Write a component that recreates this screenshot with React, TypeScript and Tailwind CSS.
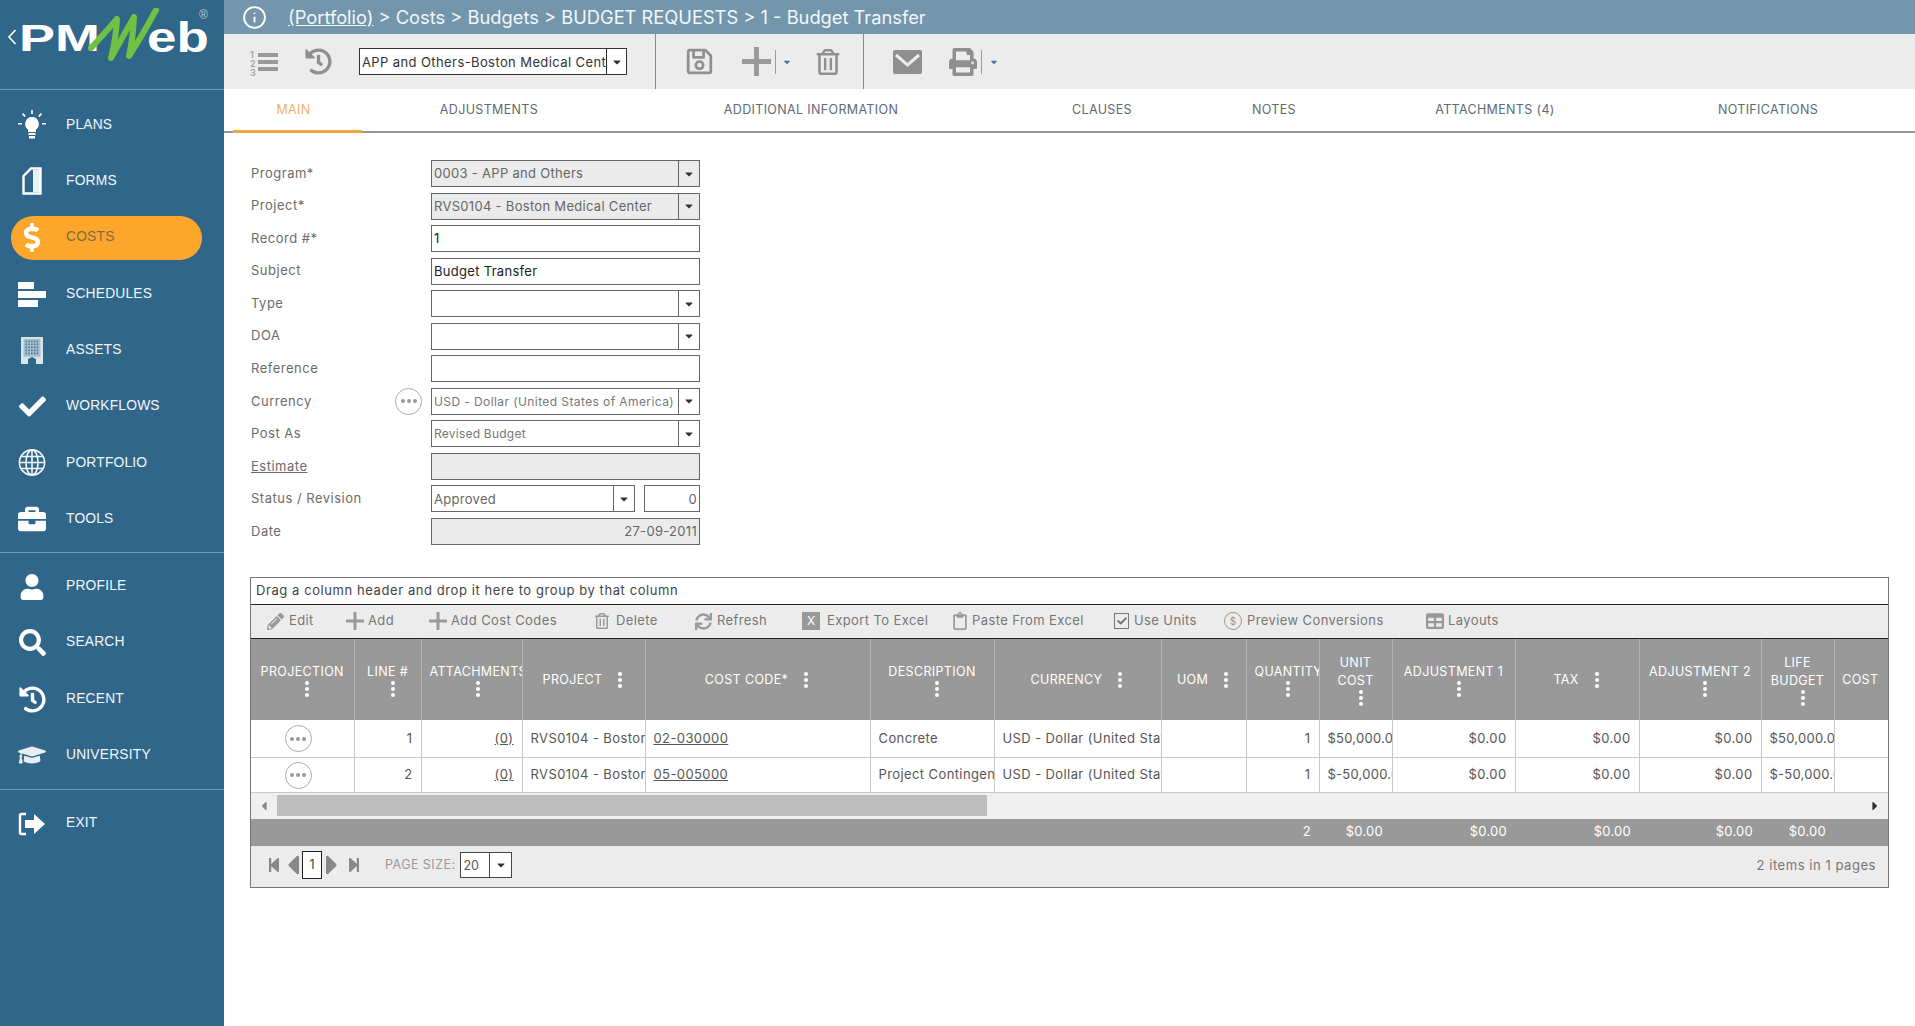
import React from "react";
import {
  FaCheck, FaBriefcase, FaSearch, FaHistory, FaGraduationCap, FaDollarSign, FaUser,
  FaRegSave, FaRegTrashAlt, FaPrint, FaPencilAlt, FaSync, FaRegClipboard, FaTable,
  FaStepBackward, FaStepForward, FaCaretLeft, FaCaretRight, FaCaretDown,
} from "react-icons/fa";
import { Info } from "lucide-react";

const font = "font-['Inter','Noto_Sans',sans-serif]";

function PlanIcon() {
  return (
    <svg viewBox="0 0 28 30" className="w-[28px] h-[30px]" fill="white">
      <path d="M14 7a7 7 0 0 0-4 12.6V22h8v-2.4A7 7 0 0 0 14 7z" />
      <rect x="10.5" y="23" width="7" height="2" />
      <rect x="11" y="26" width="6" height="2.5" />
      <path d="M13.2 0h1.6v4h-1.6zM0 13h4v1.6H0zM24 13h4v1.6h-4zM4 4.2l1.2-1.1 2.6 2.8-1.2 1.1zM24 4.2l-1.2-1.1-2.6 2.8 1.2 1.1z" />
    </svg>
  );
}
function FormIcon() {
  return (
    <svg viewBox="0 0 20 28" className="w-[20px] h-[28px]">
      <path d="M1.5 9 9 1.5h9.5v25h-17z" fill="none" stroke="white" strokeWidth="2.4" />
      <path d="M11 3h7v22h-7z" fill="white" opacity="0.9" />
    </svg>
  );
}
function SchedIcon() {
  return (
    <div className="flex flex-col gap-[2px] w-[28px]">
      <div className="h-[7px] w-[16px] bg-white" />
      <div className="h-[7px] w-[28px] bg-white" />
      <div className="h-[7px] w-[20px] bg-white" />
    </div>
  );
}
function AssetIcon() {
  const dots: React.ReactNode[] = [];
  for (let y = 0; y < 5; y++) {
    for (let x = 0; x < 5; x++) {
      dots.push(<rect key={`${x}-${y}`} x={4.4 + x * 2.8} y={3.5 + y * 3} width="1.6" height="1.8" fill="#4f7c9a" />);
    }
  }
  return (
    <svg viewBox="0 0 22 27" className="w-[22px] h-[27px]">
      <rect x="0" y="0" width="22" height="27" fill="#dbe5ec" />
      <rect x="2.5" y="1.8" width="17" height="18" fill="#a9c0cf" />
      {dots}
      <path d="M7 27v-5l4-2 4 2v5z" fill="#30668a" />
    </svg>
  );
}
function GlobeIcon() {
  return (
    <svg viewBox="0 0 30 30" className="w-[29px] h-[29px]" fill="none" stroke="#f2f6f8" strokeWidth="1.7">
      <circle cx="15" cy="15" r="13.5" />
      <ellipse cx="15" cy="15" rx="6.5" ry="13.5" />
      <path d="M15 1.5v27M1.5 15h27M3.5 8.5h23M3.5 21.5h23" />
    </svg>
  );
}
function ExitIcon() {
  return (
    <svg viewBox="0 0 28 26" className="w-[28px] h-[26px]">
      <path d="M8 3H3.5A1.5 1.5 0 0 0 2 4.5v17A1.5 1.5 0 0 0 3.5 23H8" fill="none" stroke="white" strokeWidth="2.4" />
      <path d="M7 9h9V3l11 10-11 10v-6H7z" fill="white" />
    </svg>
  );
}
function Cross({ className }: { className: string }) {
  return (
    <svg viewBox="0 0 24 24" className={className} fill="#999">
      <path d="M10 0h4v10h10v4H14v10h-4V14H0v-4h10z" />
    </svg>
  );
}

const nav1: [string, React.ReactNode][] = [
  ["PLANS", <PlanIcon />],
  ["FORMS", <FormIcon />],
  ["COSTS", <FaDollarSign className="text-white text-[29px]" />],
  ["SCHEDULES", <SchedIcon />],
  ["ASSETS", <AssetIcon />],
  ["WORKFLOWS", <FaCheck className="text-white text-[27px]" />],
  ["PORTFOLIO", <GlobeIcon />],
  ["TOOLS", <FaBriefcase className="text-white text-[28px]" />],
];
const nav2: [string, React.ReactNode][] = [
  ["PROFILE", <FaUser className="text-white text-[26px]" />],
  ["SEARCH", <FaSearch className="text-white text-[27px]" />],
  ["RECENT", <FaHistory className="text-white text-[27px]" />],
  ["UNIVERSITY", <FaGraduationCap className="text-[#e8eef2] text-[28px]" />],
];

function NavItem({ label, icon, active }: { label: string; icon: React.ReactNode; active?: boolean }) {
  return (
    <div className="h-[56.3px] flex items-center relative">
      {active && <div className="absolute left-[11px] top-[6px] w-[191px] h-[44px] rounded-[22px] bg-[#fca72c]" />}
      <div className="relative w-[66px] pl-[18px] pr-[20px] flex justify-center shrink-0">
        <div className="w-[28px] flex justify-center">{icon}</div>
      </div>
      <span className={`relative font-['Liberation_Sans',sans-serif] text-[13.8px] tracking-[0.2px] font-medium ${active ? "text-[#7d6a45]" : "text-[#f2f6f8]"}`}>{label}</span>
    </div>
  );
}

function Sidebar() {
  return (
    <aside className="w-[224px] shrink-0 bg-[#30668a] flex flex-col">
      <div className="h-[90px] border-b border-[#6f9ab5] relative font-['Liberation_Sans',sans-serif] shrink-0">
        <svg viewBox="0 0 10 16" className="absolute left-[7px] top-[29px] w-[10px] h-[16px]">
          <path d="M8.5 1 2 8l6.5 7" fill="none" stroke="white" strokeWidth="1.6" />
        </svg>
        <span className="absolute left-[19px] top-[21px] text-white text-[36px] leading-none font-bold scale-x-[1.5] origin-left">PM</span>
        <span className="absolute left-[147px] top-[17px] text-white text-[42px] leading-none font-bold scale-x-[1.26] origin-left">eb</span>
        <svg viewBox="0 0 72 56" className="absolute left-[88px] top-[8px] w-[72px] h-[56px]">
          <path d="M3 40 Q16 26 29 11 Q28 30 23 50 Q34 30 46 9 Q45 30 41 48 Q54 28 68 2" fill="none" stroke="#6fc043" strokeWidth="6" strokeLinejoin="round" strokeLinecap="round" />
        </svg>
        <span className="absolute left-[199px] top-[6px] text-[#b7cad6] text-[12px]">®</span>
      </div>
      <div className="pt-[7px]">
        {nav1.map(([l, i]) => <NavItem key={l} label={l} icon={i} active={l === "COSTS"} />)}
      </div>
      <div className="mt-[5px] border-t border-[#6f9ab5] pt-[5px]">
        {nav2.map(([l, i]) => <NavItem key={l} label={l} icon={i} />)}
      </div>
      <div className="mt-[5px] border-t border-[#6f9ab5] pt-[6px]">
        <NavItem label="EXIT" icon={<ExitIcon />} />
      </div>
    </aside>
  );
}

function Caret({ className = "" }: { className?: string }) {
  return <FaCaretDown className={`text-[#333] text-[12px] ${className}`} />;
}

function TopBars() {
  return (
    <>
      <div className="h-[34px] bg-[#7396ad] flex items-center text-white shrink-0">
        <Info className="ml-[18px] w-[25px] h-[25px]" strokeWidth={1.8} />
        <div className="ml-[21px] pt-[1px] text-[18.3px] text-[#f4f7f9] whitespace-nowrap">
          <span className="underline">(Portfolio)</span> &gt; Costs &gt; Budgets &gt; BUDGET REQUESTS &gt; 1 - Budget Transfer
        </div>
      </div>
      <div className="h-[55px] bg-[#ececec] flex items-center shrink-0">
        <div className="ml-[26px] w-[28px] text-[#a5a5a5] flex flex-col gap-[3px] relative">
          <div className="h-[4px] ml-[8px] bg-[#999]" />
          <div className="h-[4px] ml-[8px] bg-[#999]" />
          <div className="h-[4px] ml-[8px] bg-[#999]" />
          <div className="absolute left-0 -top-[3px] text-[9px] leading-[9px] font-semibold">1<br />2<br />3</div>
        </div>
        <FaHistory className="ml-[27px] text-[#8f8f8f] text-[27px]" />
        <div className="ml-[27px] w-[268px] h-[27px] bg-white border border-[#333] flex items-center">
          <span className="flex-1 pl-[2px] pt-[2px] text-[13px] text-[#333] overflow-hidden whitespace-nowrap tracking-[0.4px]">APP and Others-Boston Medical Center</span>
          <div className="w-[20px] h-full border-l border-[#333] flex items-center justify-center"><Caret /></div>
        </div>
        <div className="ml-[28px] w-px h-full bg-[#888]" />
        <FaRegSave className="ml-[29px] text-[#8f8f8f] text-[29px]" />
        <Cross className="ml-[28px] w-[29px] h-[29px]" />
        <div className="ml-[4px] w-px h-[24px] bg-[#9a9aa8]" />
        <FaCaretDown className="ml-[6px] text-[#5a6c9a] text-[10px]" />
        <FaRegTrashAlt className="ml-[23px] text-[#8f8f8f] text-[26px]" />
        <div className="ml-[22px] w-px h-full bg-[#888]" />
        <div className="ml-[29px] w-[29px] h-[24px] rounded-[2px] bg-[#8f8f8f] relative overflow-hidden">
          <svg viewBox="0 0 29 24" className="w-[29px] h-[24px]"><path d="M3 5l11.5 10L26 5" fill="none" stroke="#ececec" strokeWidth="3" /></svg>
        </div>
        <FaPrint className="ml-[27px] text-[#8f8f8f] text-[28px]" />
        <div className="ml-[4px] w-px h-[24px] bg-[#9a9aa8]" />
        <FaCaretDown className="ml-[7px] text-[#5a6c9a] text-[10px]" />
      </div>
      <div className="h-[44px] border-b-2 border-[#999] relative flex items-center text-[12.5px] tracking-[0.35px] text-[#5d6a75] shrink-0">
        <div className="absolute left-[9px] bottom-[-2px] w-[129px] h-[3px] bg-[#f0a63c]" />
        <div className="w-[138px] pl-[1px] text-center text-[#f2b06a]">MAIN</div>
        <div className="w-[128px] ml-[63px] text-center">ADJUSTMENTS</div>
        <div className="w-[190px] ml-[163px] text-center">ADDITIONAL INFORMATION</div>
        <div className="w-[80px] ml-[156px] text-center">CLAUSES</div>
        <div className="w-[60px] ml-[102px] text-center">NOTES</div>
        <div className="w-[130px] ml-[126px] text-center">ATTACHMENTS (4)</div>
        <div className="w-[120px] ml-[148px] text-center">NOTIFICATIONS</div>
      </div>
    </>
  );
}

function Field({ value, select, disabled, light, right, dark, tight, className = "w-[269px]" }: { value?: string; select?: boolean; disabled?: boolean; light?: boolean; right?: boolean; dark?: boolean; tight?: boolean; className?: string }) {
  return (
    <div className={`h-[27px] border border-[#666] flex items-center ${disabled ? "bg-[#ebebeb]" : "bg-white"} ${className}`}>
      <span className={`flex-1 px-[2px] pt-[1px] whitespace-nowrap overflow-hidden ${right ? "text-right" : ""} ${dark ? "text-[#222] text-[13px] tracking-[0.3px]" : light ? `text-[#777] text-[12px] ${tight ? "tracking-[0.23px]" : "tracking-[0.41px]"}` : "text-[#666] text-[13px] tracking-[0.3px]"}`}>{value}</span>
      {select && <div className="w-[21px] h-full border-l border-[#666] flex items-center justify-center shrink-0"><Caret /></div>}
    </div>
  );
}

function Ellipsis() {
  return (
    <div className="w-[27px] h-[27px] rounded-full border border-[#aaa] bg-white flex items-center justify-center gap-[2px]">
      <span className="w-[4px] h-[4px] rounded-full bg-[#999]" />
      <span className="w-[4px] h-[4px] rounded-full bg-[#999]" />
      <span className="w-[4px] h-[4px] rounded-full bg-[#999]" />
    </div>
  );
}

function Form() {
  const rows: [string, React.ReactNode, React.ReactNode?][] = [
    ["Program*", <Field value="0003 - APP and Others" select disabled />],
    ["Project*", <Field value="RVS0104 - Boston Medical Center" select disabled />],
    ["Record #*", <Field value="1" dark />],
    ["Subject", <Field value="Budget Transfer" dark />],
    ["Type", <Field select />],
    ["DOA", <Field select />],
    ["Reference", <Field />],
    ["Currency", <Field value="USD - Dollar (United States of America)" select light />, <Ellipsis />],
    ["Post As", <Field value="Revised Budget" select light tight />],
    ["Estimate", <Field disabled />],
    ["Status / Revision", <div className="flex justify-between w-[269px]"><Field value="Approved" select className="w-[204px]" /><Field value="0" right className="w-[56px]" /></div>],
    ["Date", <Field value="27-09-2011" disabled right />],
  ];
  return (
    <div className="ml-[27px] mt-[27px] flex flex-col gap-[5.55px]">
      {rows.map(([l, f, extra]) => (
        <div key={l} className="flex items-center h-[27px]">
          <div className="w-[180px] pr-[9px] flex items-center justify-between">
            <span className={`text-[13px] tracking-[0.5px] text-[#6b6b6b] ${l === "Estimate" ? "underline" : ""}`}>{l}</span>
            {extra}
          </div>
          {f}
        </div>
      ))}
    </div>
  );
}

function TI({ icon, label, w, slot = "w-[22px]" }: { icon: React.ReactNode; label: string; w: string; slot?: string }) {
  return (
    <div className={`flex items-center shrink-0 ${w}`}>
      <div className={`${slot} flex items-center shrink-0`}>{icon}</div>
      <span className="text-[13px] tracking-[0.4px] text-[#777] whitespace-nowrap">{label}</span>
    </div>
  );
}

function Dots({ shift }: { shift?: boolean }) {
  return (
    <span className={`inline-flex flex-col gap-[2px] items-center w-[4px] shrink-0 ${shift ? "ml-[10px]" : ""}`}>
      <span className="w-[4px] h-[4px] rounded-full bg-white" />
      <span className="w-[4px] h-[4px] rounded-full bg-white" />
      <span className="w-[4px] h-[4px] rounded-full bg-white" />
    </span>
  );
}

type Col = { label: string[]; w: string; stacked?: boolean; noDots?: boolean; clip?: boolean };
const cols: Col[] = [
  { label: ["PROJECTION"], w: "w-[103px]", stacked: true },
  { label: ["LINE #"], w: "w-[67px]", stacked: true },
  { label: ["ATTACHMENTS"], w: "w-[101px]", stacked: true, clip: true },
  { label: ["PROJECT"], w: "w-[123px]" },
  { label: ["COST CODE*"], w: "w-[225px]" },
  { label: ["DESCRIPTION"], w: "w-[124px]", stacked: true },
  { label: ["CURRENCY"], w: "w-[167px]" },
  { label: ["UOM"], w: "w-[85px]" },
  { label: ["QUANTITY"], w: "w-[73px]", stacked: true, clip: true },
  { label: ["UNIT", "COST"], w: "w-[73px]", stacked: true },
  { label: ["ADJUSTMENT 1"], w: "w-[123px]", stacked: true },
  { label: ["TAX"], w: "w-[124px]" },
  { label: ["ADJUSTMENT 2"], w: "w-[122px]", stacked: true },
  { label: ["LIFE", "BUDGET"], w: "w-[73px]", stacked: true },
  { label: ["COST"], w: "w-[54px]", noDots: true },
];

const rowsData = [
  { line: "1", code: "02-030000", desc: "Concrete", cost: "$50,000.00" },
  { line: "2", code: "05-005000", desc: "Project Contingency", cost: "$-50,000.00" },
];

const cell = "border-r border-[#c9c9c9] pl-[8px] pr-[8px] pt-[1px] whitespace-nowrap overflow-hidden text-[13px] tracking-[0.4px] text-[#555]";
const costCell = "border-r border-[#c9c9c9] pl-[8px] pt-[1px] whitespace-nowrap overflow-hidden text-[13px] tracking-[0.25px] text-[#555]";

function Grid() {
  return (
    <div className="ml-[26px] mt-[32px] w-[1639px] h-[311px] border border-[#777] flex flex-col overflow-hidden">
      <div className="h-[27px] border-b border-[#222] flex items-center pl-[5px] text-[13px] tracking-[0.58px] text-[#444] shrink-0">Drag a column header and drop it here to group by that column</div>
      <div className="h-[34px] bg-[#ececec] border-b border-[#222] flex items-center pl-[16px] pb-[1px] shrink-0">
        <TI w="w-[79px]" icon={<FaPencilAlt className="text-[#999] text-[17px]" />} label="Edit" />
        <TI w="w-[83px]" icon={<Cross className="w-[18px] h-[18px]" />} label="Add" />
        <TI w="w-[165px]" icon={<Cross className="w-[18px] h-[18px]" />} label="Add Cost Codes" />
        <TI w="w-[101px]" icon={<FaRegTrashAlt className="text-[#999] text-[16px]" />} label="Delete" />
        <TI w="w-[107px]" icon={<FaSync className="text-[#999] text-[17px]" />} label="Refresh" />
        <TI w="w-[149px]" slot="w-[25px]" icon={<span className="w-[18px] h-[18px] bg-[#999] text-white text-[12px] leading-[18px] text-center">X</span>} label="Export To Excel" />
        <TI w="w-[163px]" slot="w-[21px]" icon={<FaRegClipboard className="text-[#999] text-[18px]" />} label="Paste From Excel" />
        <TI w="w-[110px]" slot="w-[20px]" icon={<span className="w-[15px] h-[16px] border border-[#777] text-[#777] flex items-center justify-center"><FaCheck className="text-[10px]" /></span>} label="Use Units" />
        <TI w="w-[202px]" slot="w-[23px]" icon={<span className="w-[18px] h-[18px] rounded-full border border-[#999] text-[#999] text-[10px] flex items-center justify-center">$</span>} label="Preview Conversions" />
        <TI w="w-[80px]" icon={<FaTable className="text-[#999] text-[18px]" />} label="Layouts" />
      </div>
      <table className="table-fixed border-collapse w-[1637px] shrink-0">
        <thead>
          <tr className="h-[81px] bg-[#999999]">
            {cols.map((c) => (
              <th key={c.label[0]} className={`${c.w} p-0 border-r border-[#b5b5b5] last:border-r-0 overflow-hidden align-middle`}>
                <div className={`flex items-center whitespace-nowrap text-[12.5px] font-normal leading-[18px] tracking-[0.35px] text-white ${c.clip ? "flex-col w-max ml-[8px]" : c.stacked ? "flex-col justify-center" : "justify-center gap-[16px] pr-[2px]"}`}>
                  <span>{c.label.map((t) => <span key={t} className="block">{t}</span>)}</span>
                  {!c.noDots && <Dots shift={c.stacked && !c.clip} />}
                </div>
              </th>
            ))}
          </tr>
        </thead>
        <tbody>
          {rowsData.map((r, i) => (
            <tr key={r.line} className={`${i === 0 ? "h-[37px]" : "h-[35px]"} border-b border-[#c9c9c9]`}>
              <td className={cell}><div className="flex justify-center -ml-[8px]"><Ellipsis /></div></td>
              <td className={`${cell} text-right`}>{r.line}</td>
              <td className={`${cell} text-right underline`}>(0)</td>
              <td className={cell}>RVS0104 - Boston Medical Center</td>
              <td className={`${cell} underline`}>{r.code}</td>
              <td className={cell}>{r.desc}</td>
              <td className={cell}>USD - Dollar (United States of America)</td>
              <td className={cell}></td>
              <td className={`${cell} text-right`}>1</td>
              <td className={costCell}>{r.cost}</td>
              <td className={`${cell} text-right`}>$0.00</td>
              <td className={`${cell} text-right`}>$0.00</td>
              <td className={`${cell} text-right`}>$0.00</td>
              <td className={costCell}>{r.cost}</td>
              <td className="p-0"></td>
            </tr>
          ))}
        </tbody>
      </table>
      <div className="h-[26px] bg-[#efefef] flex items-center shrink-0 relative">
        <div className="w-[26px] flex justify-center"><FaCaretLeft className="text-[#888] text-[14px]" /></div>
        <div className="w-[710px] h-[21px] bg-[#bdbdbd]" />
        <FaCaretRight className="absolute right-[6px] text-[#333] text-[14px]" />
      </div>
      <table className="table-fixed border-collapse w-[1637px] shrink-0">
        <tbody>
          <tr className="h-[27px] bg-[#999999] text-white text-[13px] tracking-[0.25px] text-right">
            <td className="w-[1068px] pr-[8px]">2</td>
            <td className="w-[73px] pr-[9px]">$0.00</td>
            <td className="w-[123px] pr-[8px]">$0.00</td>
            <td className="w-[124px] pr-[8px]">$0.00</td>
            <td className="w-[122px] pr-[8px]">$0.00</td>
            <td className="w-[73px] pr-[8px]">$0.00</td>
            <td className="w-[54px]"></td>
          </tr>
        </tbody>
      </table>
      <div className="flex-1 bg-[#ececec] flex items-center pb-[2px] relative">
        <FaStepBackward className="ml-[16px] w-[14px] h-[16px] text-[#888]" />
        <FaCaretLeft className="ml-[6px] w-[12px] h-[32px] text-[#888]" />
        <div className="ml-[3px] w-[20px] h-[28px] border border-[#222] bg-white flex items-center justify-center text-[12.5px] text-[#444]">1</div>
        <FaCaretRight className="ml-[4px] w-[12px] h-[32px] text-[#888]" />
        <FaStepForward className="ml-[9px] w-[14px] h-[16px] text-[#888]" />
        <span className="ml-[24px] text-[12.5px] tracking-[0.45px] text-[#999]">PAGE SIZE:</span>
        <div className="ml-[5px] w-[52px] h-[26px] border border-[#444] bg-white flex items-center">
          <span className="flex-1 pl-[2px] pt-[2px] text-[12.5px] text-[#555]">20</span>
          <div className="w-[22px] h-full border-l border-[#444] flex items-center justify-center"><Caret /></div>
        </div>
        <span className="ml-auto mr-[12px] text-[13px] tracking-[0.55px] text-[#777]">2 items in 1 pages</span>
      </div>
    </div>
  );
}

export default function App() {
  return (
    <div className={`h-screen w-full flex overflow-hidden bg-white ${font}`}>
      <Sidebar />
      <main className="flex-1 min-w-0 flex flex-col">
        <TopBars />
        <Form />
        <Grid />
      </main>
    </div>
  );
}
